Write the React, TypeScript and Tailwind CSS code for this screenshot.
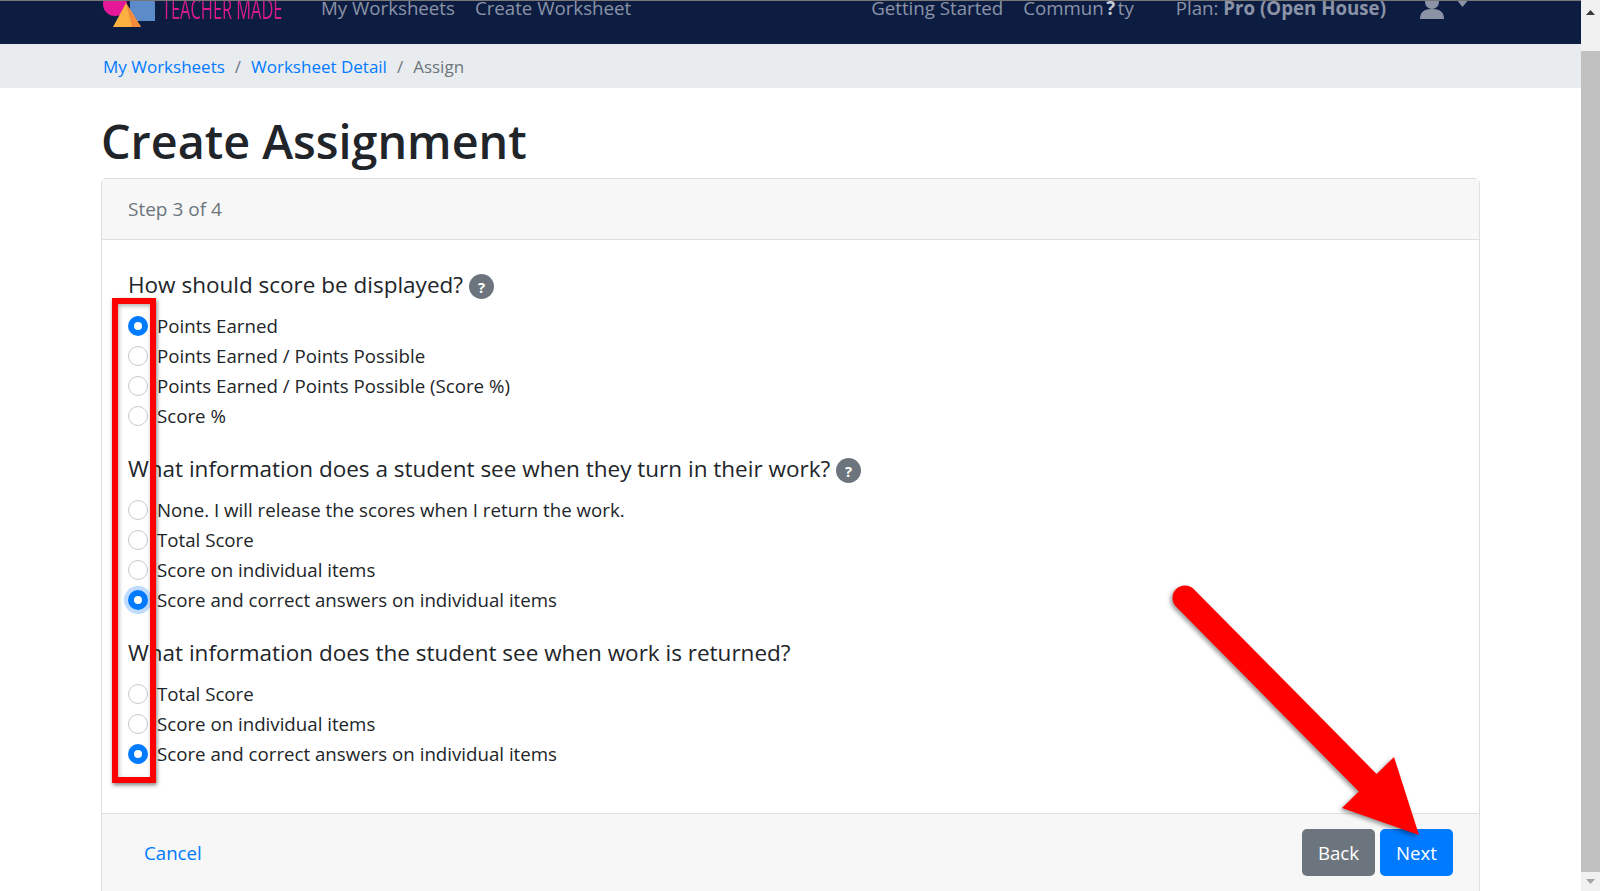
const font = { fontFamily: '"Open Sans", "Noto Sans", sans-serif' };

const groups = [
  {
    question: "How should score be displayed?",
    help: true,
    options: [
      { label: "Points Earned", checked: true },
      { label: "Points Earned / Points Possible" },
      { label: "Points Earned / Points Possible (Score %)" },
      { label: "Score %" },
    ],
  },
  {
    question: "What information does a student see when they turn in their work?",
    help: true,
    options: [
      { label: "None. I will release the scores when I return the work." },
      { label: "Total Score" },
      { label: "Score on individual items" },
      { label: "Score and correct answers on individual items", checked: true, focused: true },
    ],
  },
  {
    question: "What information does the student see when work is returned?",
    options: [
      { label: "Total Score" },
      { label: "Score on individual items" },
      { label: "Score and correct answers on individual items", checked: true },
    ],
  },
];

const Radio = ({ checked, focused }: { checked?: boolean; focused?: boolean }) => (
  <span
    className={
      checked
        ? `w-5 h-5 rounded-full bg-[#007bff] flex items-center justify-center shrink-0 ${focused ? "shadow-[0_0_0_4px_#bfdcff]" : ""}`
        : "w-5 h-5 rounded-full bg-white border border-[#c3c9cf] shrink-0"
    }
  >
    {checked && <span className="w-2 h-2 rounded-full bg-white" />}
  </span>
);

const Logo = () => (
  <svg width="52" height="34" viewBox="0 -6 52 34" className="shrink-0">
    <circle cx="12" cy="4" r="12" fill="#e5189a" />
    <rect x="27" y="-8" width="25" height="29" fill="#5b8bc9" />
    <polygon points="44,-6 52,-6 52,3" fill="#7d63c4" />
    <polygon points="23,3 10,27 38,27" fill="#fbb040" />
    <polygon points="23,3 29,27 38,27" fill="#f58a3c" />
  </svg>
);

export default function App() {
  return (
    <div className="relative h-[891px] w-[1600px] overflow-hidden bg-white flex" style={font}>
      <div className="w-[1581px] shrink-0">
        <nav className="h-[44px] bg-[#0d1d42] border-t border-[#777] overflow-hidden pl-[103px] pr-[112px] flex items-start text-[18.7px] text-[#8b93a7]">
          <div className="flex items-center -mt-[8px] w-full h-[30px] whitespace-nowrap">
            <div className="mt-[6px]"><Logo /></div>
            <div className="ml-[7px] w-[120px] shrink-0">
              <span className="block origin-left scale-x-[0.585] text-[#d91a8c] text-[28px] font-medium leading-none -mt-[1px]">TEACHER MADE</span>
            </div>
            <span className="ml-[39px]">My Worksheets</span>
            <span className="ml-5">Create Worksheet</span>
            <span className="ml-auto">Getting Started</span>
            <span className="ml-5">
              Commun<span className="mx-[2.5px] text-[#c3c9d6] font-bold">?</span>ty
            </span>
            <span className="ml-[42px]">
              Plan: <b>Pro (Open House)</b>
            </span>
            <svg width="24" height="28" viewBox="0 0 24 28" fill="#8b93a7" className="ml-[34px] -mt-[4px]">
              <circle cx="12" cy="10" r="7" />
              <path d="M0 27c0-7 4-10 12-10s12 3 12 10z" />
            </svg>
            <svg width="13" height="8" viewBox="0 0 13 8" fill="#8b93a7" className="ml-3 -mt-[10px]">
              <path d="M0 0h13L6.5 8z" />
            </svg>
          </div>
        </nav>
        <div className="h-[44px] bg-[#e9ecef] pl-[103px] pt-px flex items-center gap-[10px] text-[17px] text-[#6c757d]">
          <a className="text-[#007bff]">My Worksheets</a>
          <span>/</span>
          <a className="text-[#007bff]">Worksheet Detail</a>
          <span>/</span>
          <span>Assign</span>
        </div>
        <div className="pl-[101px] pr-[101px] pt-[19px]">
          <h1 className="text-[46.7px] leading-[68px] text-[#212529] font-semibold mb-[3px]">Create Assignment</h1>
          <div className="border border-[#dfdfdf] rounded-[5px]">
            <div className="h-[61px] bg-[#f7f7f7] border-b border-[#dfdfdf] px-[26px] flex items-center text-[19px] text-[#6c757d]">
              Step 3 of 4
            </div>
            <div className="px-[26px] pt-[27px] h-[573px]">
              {groups.map((group) => (
                <div key={group.question} className="mb-[20px]">
                  <div className="flex items-center gap-[6px] text-[22.5px] leading-[36px] text-[#212529]">
                    {group.question}
                    {group.help && (
                      <span className="w-[25px] h-[25px] mt-[3px] rounded-full bg-[#6c757d] text-white text-[15px] font-bold flex items-center justify-center">
                        ?
                      </span>
                    )}
                  </div>
                  <div className="mt-[8px]">
                    {group.options.map((option) => (
                      <label key={option.label} className="h-[30px] flex items-center gap-[9px] text-[18.7px] text-[#212529]">
                        <Radio checked={option.checked} focused={option.focused} />
                        {option.label}
                      </label>
                    ))}
                  </div>
                </div>
              ))}
            </div>
            <div className="h-[100px] bg-[#f7f7f7] border-t border-[#dfdfdf] px-[26px] pt-[15px] flex items-start justify-between">
              <a className="ml-[16px] mt-[10px] text-[18.7px] text-[#007bff]">Cancel</a>
              <div className="flex gap-[5px]">
                <button className="w-[73px] h-[47px] pt-[2px] rounded-[5px] bg-[#6c757d] text-white text-[18.7px]">Back</button>
                <button className="w-[73px] h-[47px] pt-[2px] rounded-[5px] bg-[#007bff] text-white text-[18.7px]">Next</button>
              </div>
            </div>
          </div>
        </div>
      </div>

      <div className="w-[19px] bg-[#f1f1f1] flex flex-col items-center shrink-0">
        <div className="h-[24px] flex items-center">
          <svg width="9" height="5" viewBox="0 0 9 5" fill="#3a3a3a"><path d="M4.5 0l4.5 5H0z" /></svg>
        </div>
        <div className="w-full flex-1 bg-[#c1c1c1] mt-[27px]" />
        <div className="h-[19px] flex items-center">
          <svg width="9" height="5" viewBox="0 0 9 5" fill="#a3a3a3"><path d="M0 0h9L4.5 5z" /></svg>
        </div>
      </div>

      {/* annotations */}
      <div className="absolute left-[112px] top-[298px] w-[44px] h-[485px] border-[6px] border-[#ff0000] shadow-[1px_2px_4px_rgba(0,0,0,0.5),inset_1px_2px_4px_rgba(0,0,0,0.3)]" />
      <svg className="absolute left-[1170px] top-[585px] drop-shadow-[-2px_2px_2px_rgba(0,0,0,0.4)]" width="260" height="260" viewBox="1170 585 260 260">
        <path d="M1185 598L1368 783" stroke="#ff0000" strokeWidth="25" strokeLinecap="round" fill="none" />
        <polygon points="1394,757 1419,835 1342,808" fill="#ff0000" />
      </svg>
    </div>
  );
}
